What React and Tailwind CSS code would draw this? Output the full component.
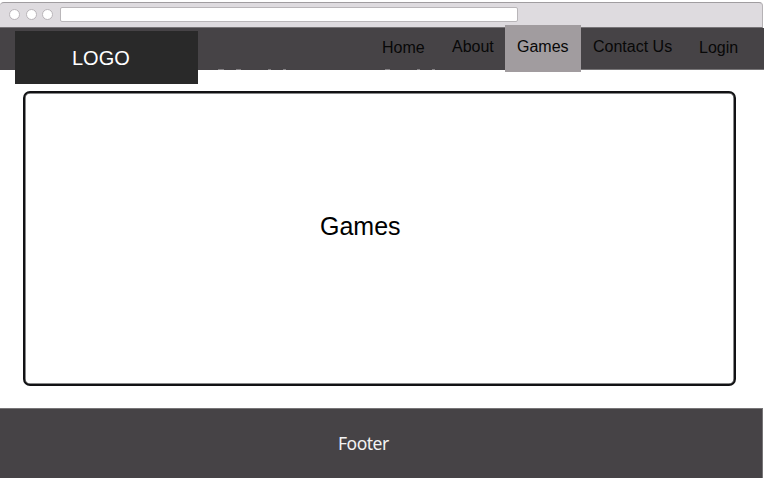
const links = [
  { label: "Home", cls: "ml-[184px] w-[43px] pt-[10px]" },
  { label: "About", cls: "ml-[27px] w-[42px] pt-[9px]" },
  { label: "Games", cls: "ml-[11px] w-[76px] h-[47px] -mt-[3px] pt-[12px] pl-[12px] bg-[#a19c9f] relative" },
  { label: "Contact Us", cls: "ml-[12px] w-[80px] pt-[9px]" },
  { label: "Login", cls: "ml-[26px] w-[42px] pt-[10px]" },
];

function BrowserBar() {
  return (
    <div className="mt-px mr-px flex h-[26px] shrink-0 items-start rounded-t-[4px] border-t border-r border-b border-t-[#a09da0] border-r-[#b5b2b5] border-b-[#777477] bg-[#dedbdf] pt-[4px] pl-[9px]">
      <div className="mt-[2px] flex gap-[5.5px]">
        {[0, 1, 2].map((i) => (
          <span key={i} className="h-[11px] w-[11px] rounded-full border border-[#b9b5b9] bg-white" />
        ))}
      </div>
      <div className="ml-[7px] h-[15px] w-[458px] rounded-[2px] border border-[#b9b6b9] bg-white" />
    </div>
  );
}

function Navigation() {
  return (
    <nav className="flex h-[42px] shrink-0 items-start bg-[#464346] pl-[15px] text-[16px] leading-[20px] text-[#080808]">
      <div className="relative mt-[3px] h-[53px] w-[183px] shrink-0 bg-[#292929] pt-[15px] pl-[57px] text-[20px] leading-[24px] text-white">
        LOGO
      </div>
      {links.map((l) => (
        <a key={l.label} className={"block shrink-0 whitespace-nowrap " + l.cls}>
          {l.label}
        </a>
      ))}
    </nav>
  );
}

// Faint marks along the lower edge of the navigation bar
function EdgeMarks() {
  return (
    <svg className="absolute top-[69px] left-0" width="764" height="1" viewBox="0 0 764 1" fill="#858285">
      <rect x="218" width="6" height="1" />
      <rect x="236" width="5" height="1" />
      <rect x="268" width="3" height="1" />
      <rect x="283" width="3" height="1" />
      <rect x="385" width="5" height="1" />
      <rect x="417" width="3" height="1" />
      <rect x="432" width="3" height="1" />
      <rect x="581" width="183" height="1" fill="#777577" />
    </svg>
  );
}

export default function App() {
  return (
    <div className="relative flex h-[478px] w-[764px] flex-col overflow-hidden bg-white font-['Liberation_Sans',Arial,sans-serif]">
      <div className="h-px shrink-0" />
      <BrowserBar />
      <Navigation />
      <EdgeMarks />
      <main className="mt-[21px] ml-[23px] h-[295px] w-[713px] shrink-0 rounded-[7px] border-2 border-[#111214] pt-[118px] pl-[295px] text-[25px] leading-[30px] text-black shadow-[inset_0_0_0_0.5px_#111214]">
        Games
      </main>
      <footer className="mt-[22px] mr-px h-[70px] shrink-0 border-t border-r border-[#777577] bg-[#464346] pt-[22px] pl-[338px] font-['Noto_Sans',sans-serif] text-[17.5px] leading-[24px] tracking-[-0.5px] text-[#f3f3f3]">
        Footer
      </footer>
    </div>
  );
}
